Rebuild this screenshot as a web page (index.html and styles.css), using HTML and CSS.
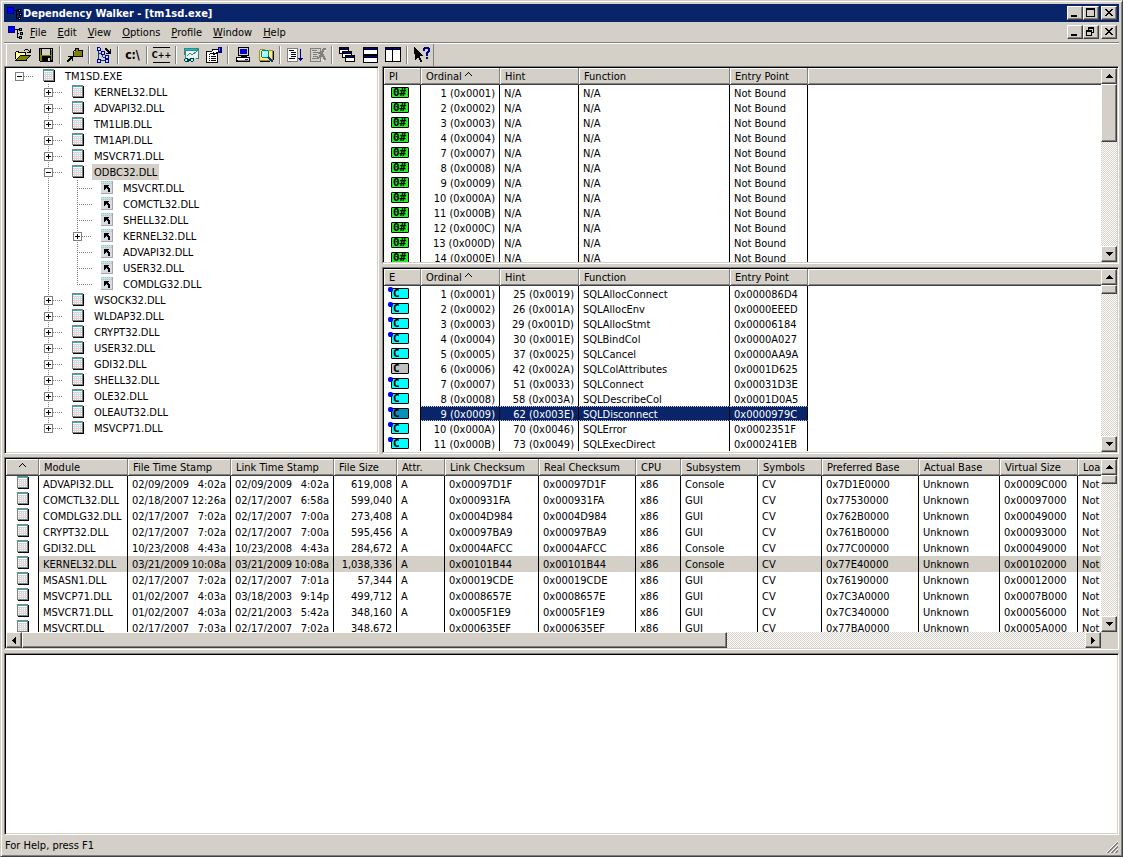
FILE: index.html
```html
<!DOCTYPE html>
<html lang="en">
<head>
  <meta charset="UTF-8" />
  <title>Dependency Walker - [tm1sd.exe]</title>
  <link rel="stylesheet" href="styles.css">
</head>
<body>

  <!-- icon sprite -->
  <svg class="sprite" xmlns="http://www.w3.org/2000/svg">
    <symbol id="i-app" viewBox="0 0 16 16">
      <path d="M0 2h7v7h-7z" fill="#000080"/><path d="M1 3h5v5h-5z" fill="#00f"/>
      <path d="M7 5h2v1h-2zM9 5h1v9h-1zM10 5h1v1h-1zM10 9h1v1h-1zM10 13h1v1h-1z" fill="#000"/>
      <path d="M11 4h3v3h-3zM12 8h3v3h-3zM11 12h3v3h-3z" fill="#000"/>
      <path d="M12 5h1v1h-1zM13 9h1v1h-1zM12 13h1v1h-1z" fill="#6cc"/>
    </symbol>
    <symbol id="i-min" viewBox="0 0 12 10"><path d="M2 7h6v2h-6z"/></symbol>
    <symbol id="i-max" viewBox="0 0 12 10"><path d="M1 0h9v9h-9zM2 2v6h7v-6z" fill-rule="evenodd"/></symbol>
    <symbol id="i-restore" viewBox="0 0 12 10"><path d="M3 0h6v6h-2v3h-6v-6h2zM4 2v1h3v2h1v-3zM2 5v3h4v-3z" fill-rule="evenodd"/></symbol>
    <symbol id="i-close" viewBox="0 0 12 10"><path d="M2 1h2v1h1v1h2v-1h1v-1h2v1h-1v1h-1v1h-1v1h1v1h1v1h1v1h-2v-1h-1v-1h-2v1h-1v1h-2v-1h1v-1h1v-1h1v-1h-1v-1h-1v-1h-1z"/></symbol>
    <symbol id="i-up" viewBox="0 0 7 4"><path d="M3 0h1v1h1v1h1v1h1v1h-7v-1h1v-1h1v-1h1z"/></symbol>
    <symbol id="i-down" viewBox="0 0 7 4"><path d="M0 0h7v1h-1v1h-1v1h-1v1h-1v-1h-1v-1h-1v-1h-1z"/></symbol>
    <symbol id="i-left" viewBox="0 0 4 7"><path d="M4 0v7h-1v-1h-1v-1h-1v-1h-1v-1h1v-1h1v-1h1v-1z"/></symbol>
    <symbol id="i-right" viewBox="0 0 4 7"><path d="M0 0v7h1v-1h1v-1h1v-1h1v-1h-1v-1h-1v-1h-1v-1z"/></symbol>

    <symbol id="i-open" viewBox="0 0 16 16">
      <path d="M9 3h1v-1h3v1h1v1h1v-2h1v4h-4v-1h2v-1h-1v-1h-3v1h-1z"/>
      <path d="M1 5h3v1h6v2h-5l-3 5h-1z" fill="#ffff9c"/>
      <path d="M1 4h3v1h7v3h-1v-2h-7v-1h-2v7h-1v-7h1z"/>
      <path d="M5 8h11v1h-1v1h-1v1h-1v1h-1v2h-12v-1h1v-1h1v-1h1v-1h1v-1h1z"/>
      <path d="M5 9h9v1h-1v1h-1v1h-1v1h-9v-1h1v-1h1v-1h1z" fill="#808000"/>
    </symbol>
    <symbol id="i-save" viewBox="0 0 16 16">
      <path d="M1 1h14v14h-13v-1h-1z"/>
      <path d="M2 2h1v12h-1zM3 8h11v1h-11zM13 3h1v10h-1zM3 9h1v5h-1z" fill="#808000"/>
      <path d="M4 2h8v6h-8z" fill="#d4d0c8"/><path d="M10 11h2v3h-2zM13 2h1v1h-1z" fill="#d4d0c8"/>
    </symbol>
    <symbol id="i-find" viewBox="0 0 16 16">
      <path d="M8 1h4v2h4v7h-10v-6h1v-1h1z"/>
      <path d="M9 2h2v2h-2zM7 4h8v5h-8z" fill="#808000"/><path d="M7 4h1v1h-1z" fill="#d4d0c8"/>
      <path d="M1 9h5v5h-1v-2h-1v1h-1v1h-1v1h-2v-2h1v-1h1v-1h1v-1h-2z"/>
    </symbol>
    <symbol id="i-tree" viewBox="0 0 16 16">
      <path d="M2 4h1v8h-1zM3 6h2v1h-2zM3 13h6v1h-6zM6 8h1v2h-1zM7 10h2v1h-2z" fill="#004080"/>
      <path d="M1 0h3v1h1v3h-4zM5 4h4v4h-4zM9 8h4v4h-4zM9 12h4v4h-4zM1 12h4v4h-4z" fill="#0000a0"/>
      <path d="M2 1h2v2h-2zM6 5h2v2h-2zM10 9h2v2h-2zM10 13h2v2h-2zM2 13h2v2h-2z" fill="#cde"/>
      <path d="M9 1h2v1h1v1h1v1h1v-2h1v5h-5v-1h2v-1h-1v-1h-1v-1h-1z"/>
    </symbol>
    <symbol id="i-view" viewBox="0 0 16 16">
      <path d="M1 1h15v11h-3v-1h2v-7h-12v7h-1v-3h-1z" fill="#408080"/>
      <path d="M2 2h12v1h-12z" fill="#0cc"/><path d="M3 4h12v7h-12z" fill="#e8f4f4"/>
      <path d="M4 9l3-3 2 2 5-4" stroke="#408080" fill="none"/>
      <path d="M1 11h4v1h2v-1h4v3h-1v1h-2v-1h-2v1h-4v-1h-1v-2h1z" fill="#004040"/>
      <path d="M2 12h2v2h-2zM8 12h2v2h-2z" fill="#9ff"/>
    </symbol>
    <symbol id="i-prop" viewBox="0 0 16 16">
      <path d="M0 4h12v12h-12z"/><path d="M1 5h10v10h-10z" fill="#fff"/>
      <path d="M3 7h1v1h-1zM5 9h5v1h-5zM3 9h1v1h-1zM3 11h1v1h-1zM5 11h5v1h-5zM3 13h1v1h-1zM5 13h5v1h-5z"/>
      <path d="M6 2h7v4h-2v1h-2v1h-2v-1h-3v-1h1v-2h1z"/><path d="M7 3h5v2h-2v1h-2v-1h-1v1h-2v-1h1v-1h1z" fill="#fff"/>
      <path d="M12 0h4v6h-4z" fill="#000080"/><path d="M13 1h1v3h-1z" fill="#66f"/>
    </symbol>
    <symbol id="i-pc" viewBox="0 0 16 16">
      <path d="M3 0h11v9h-11z"/><path d="M4 1h9v7h-9z" fill="#d4d0c8"/><path d="M5 2h7v5h-7z" fill="#00c"/>
      <path d="M6 9h6v1h-6zM1 10h14v5h-14z"/><path d="M2 11h12v2h-12z" fill="#fff"/><path d="M3 13h11v1h-11z" fill="#808080"/><path d="M10 12h3v1h-3z" fill="#00f"/>
    </symbol>
    <symbol id="i-search" viewBox="0 0 16 16">
      <path d="M1 3h1v-1h5v1h8v11h-14z" fill="#a09030"/><path d="M2 3h5v1h7v9h-12z" fill="#ffe97f"/>
      <circle cx="7" cy="7" r="4" fill="#9ff" stroke="#008080"/><path d="M5 5h2v1h-1v1h-1z" fill="#fff"/>
      <path d="M10 10l5 5" stroke="#004080" stroke-width="2"/>
      <path d="M15 4h1v9h-1zM2 14h10v1h-10z"/>
    </symbol>
    <symbol id="i-expand" viewBox="0 0 16 16">
      <path d="M0 1h11v14h-11z" fill="#808080"/><path d="M1 2h9v12h-9z" fill="#fff"/>
      <path d="M2 3h5v1h-5zM4 5h5v1h-5zM4 7h5v1h-5zM4 9h5v1h-5zM2 11h6v1h-6z"/>
      <path d="M13 2h1v9h2v1h-1v1h-1v1h-1v-1h-1v-1h-1v-1h2z" fill="#000080"/>
    </symbol>
    <symbol id="i-noexp" viewBox="0 0 16 16">
      <path d="M0 1h11v14h-11z" fill="#808080"/><path d="M1 2h9v12h-9z" fill="#d4d0c8"/>
      <path d="M2 3h5v1h-5zM3 5h5v1h-5zM3 7h4v1h-4zM3 9h5v1h-5zM2 11h6v1h-6z" fill="#808080"/>
      <path d="M13 1h3v2h-2v2h-1v2h1v2h1v2h1v2h-2v-1h-1v-2h-2v1h-2v1h-2v-2h2v-2h1v-1h-2v-2h3v-1h1z" fill="#808080"/>
      <path d="M15 3h1v1h-1zM11 12h1v1h-1zM13 13h1v1h-1z" fill="#fff"/>
    </symbol>
    <symbol id="i-cascade" viewBox="0 0 16 16">
      <path d="M0 0h10v7h-10zM3 4h10v7h-10zM6 8h10v7h-10z"/>
      <path d="M1 3h8v1h-6v2h-2zM4 7h8v1h-6v2h-2zM7 11h8v3h-8z" fill="#fff"/>
      <path d="M1 1h8v1h-8zM4 5h8v1h-8zM7 9h8v1h-8z" fill="#000080"/>
    </symbol>
    <symbol id="i-horz" viewBox="0 0 16 16">
      <path d="M1 0h15v16h-15z"/><path d="M2 3h13v4h-13zM2 11h13v4h-13z" fill="#fff"/>
      <path d="M2 1h13v1h-13zM2 9h13v1h-13z" fill="#0000a0"/>
    </symbol>
    <symbol id="i-vert" viewBox="0 0 16 16">
      <path d="M0 0h16v15h-16z"/><path d="M1 3h6v11h-6zM8 3h7v11h-7z" fill="#fff"/>
      <path d="M1 1h6v1h-6zM8 1h7v1h-7z" fill="#0000a0"/>
    </symbol>
    <symbol id="i-help" viewBox="0 0 16 16">
      <path d="M0 0h1v1h1v1h1v1h1v1h1v1h1v1h1v1h1v1h1v1h-3v2h1v2h1v2h-2v-2h-1v-2h-2v1h-1v1h-1z"/>
      <path d="M9 1h1v-1h5v1h1v4h-1v1h-1v3h-2v-4h1v-1h1v-2h-3v2h-2zM12 10h2v2h-2z" fill="#000080"/>
    </symbol>

    <symbol id="i-mod" viewBox="0 0 12 13">
      <path d="M1 1h11v12h-11z"/><path d="M0 0h11v12h-11z" fill="#808080"/>
      <path d="M1 3h9v8h-9z" fill="#d8d4d8"/><path d="M1 1h9v1h-9z" fill="#2bb"/><path d="M1 2h9v1h-9z" fill="#fff"/>
      <path d="M1 4.500h9M1 6.500h9M1 8.500h9M1 10.500h9" stroke="#fff" stroke-dasharray="1 1"/>
    </symbol>
    <symbol id="i-dup" viewBox="0 0 12 13">
      <path d="M0 0h12v13h-12z" fill="#a8a8ac"/><path d="M0 0h11v12h-11z" fill="#d8dce0"/>
      <path d="M0 .5h11M0 2.500h11" stroke="#8cc" stroke-dasharray="1 1"/>
      <path d="M3 4h5v1h-1v1h1v1h1v4h-2v-3h-1v-1h-1v1h-1v1h-1z"/>
    </symbol>
  </svg>

  <div class="window">
    <header class="titlebar">
      <svg class="icon"><use href="#i-app"/></svg>
      <h1>Dependency Walker - [tm1sd.exe]</h1>
      <div class="win-buttons">
        <button aria-label="Minimize"><svg><use href="#i-min"/></svg></button>
        <button aria-label="Maximize"><svg><use href="#i-max"/></svg></button>
        <button aria-label="Close"><svg><use href="#i-close"/></svg></button>
      </div>
    </header>

    <nav class="menubar">
      <svg class="icon"><use href="#i-app"/></svg>
      <button><u>F</u>ile</button>
      <button><u>E</u>dit</button>
      <button><u>V</u>iew</button>
      <button><u>O</u>ptions</button>
      <button><u>P</u>rofile</button>
      <button><u>W</u>indow</button>
      <button><u>H</u>elp</button>
      <div class="win-buttons">
        <button aria-label="Minimize document"><svg><use href="#i-min"/></svg></button>
        <button aria-label="Restore document"><svg><use href="#i-restore"/></svg></button>
        <button aria-label="Close document"><svg><use href="#i-close"/></svg></button>
      </div>
    </nav>

    <div class="toolbar-row">
      <div class="toolbar">
        <button aria-label="Open"><svg><use href="#i-open"/></svg></button>
        <button aria-label="Save"><svg><use href="#i-save"/></svg></button>
        <i class="sep"></i>
        <button aria-label="Copy"><svg><use href="#i-find"/></svg></button>
        <i class="sep"></i>
        <button aria-label="Auto expand"><svg><use href="#i-tree"/></svg></button>
        <i class="sep"></i>
        <button class="path-btn">c:\</button>
        <i class="sep"></i>
        <button class="cpp-btn">C++</button>
        <i class="sep"></i>
        <button aria-label="View module"><svg><use href="#i-view"/></svg></button>
        <button aria-label="Properties"><svg><use href="#i-prop"/></svg></button>
        <i class="sep"></i>
        <button aria-label="System information"><svg><use href="#i-pc"/></svg></button>
        <button aria-label="Search order"><svg><use href="#i-search"/></svg></button>
        <i class="sep"></i>
        <button aria-label="Start profiling"><svg><use href="#i-expand"/></svg></button>
        <button aria-label="Stop profiling" disabled><svg><use href="#i-noexp"/></svg></button>
        <i class="sep"></i>
        <button aria-label="Cascade"><svg><use href="#i-cascade"/></svg></button>
        <button aria-label="Tile horizontally"><svg><use href="#i-horz"/></svg></button>
        <button aria-label="Tile vertically"><svg><use href="#i-vert"/></svg></button>
        <i class="sep"></i>
        <button aria-label="Context help"><svg><use href="#i-help"/></svg></button>
      </div>
    </div>

    <main class="panes">
      <div class="upper">
        <section class="pane tree" id="tree"></section>
        <div class="functions">
          <section class="pane">
            <div class="view">
              <table class="list" id="imports"></table>
            </div>
            <div class="vscroll">
              <button aria-label="Scroll up"><svg class="v"><use href="#i-up"/></svg></button>
              <div class="thumb thumb-mid"></div>
              <button aria-label="Scroll down"><svg class="v"><use href="#i-down"/></svg></button>
            </div>
          </section>
          <section class="pane">
            <div class="view">
              <table class="list" id="exports"></table>
            </div>
            <div class="vscroll">
              <button aria-label="Scroll up"><svg class="v"><use href="#i-up"/></svg></button>
              <div class="thumb"></div>
              <button aria-label="Scroll down"><svg class="v"><use href="#i-down"/></svg></button>
            </div>
          </section>
        </div>
      </div>

      <section class="pane modules">
        <div class="view">
          <table class="list" id="modules"></table>
        </div>
        <div class="vscroll">
          <button aria-label="Scroll up"><svg class="v"><use href="#i-up"/></svg></button>
          <div class="thumb"></div>
          <button aria-label="Scroll down"><svg class="v"><use href="#i-down"/></svg></button>
        </div>
        <div class="hscroll">
          <button aria-label="Scroll left"><svg class="h"><use href="#i-left"/></svg></button>
          <div class="thumb"></div>
          <button aria-label="Scroll right"><svg class="h"><use href="#i-right"/></svg></button>
        </div>
      </section>

      <section class="pane log"></section>
    </main>

    <footer class="statusbar">
      <span>For Help, press F1</span>
      <svg class="grip" viewBox="0 0 12 12">
        <path d="M0 12L12 0M4 12L12 4M8 12L12 8" stroke="#fff"/>
        <path d="M1 12L12 1M2 12L12 2M5 12L12 5M6 12L12 6M9 12L12 9M10 12L12 10" stroke="#808080"/>
      </svg>
    </footer>
  </div>

  <script>
    const tree = {
      name: 'TM1SD.EXE', open: true, children: [
        { name: 'KERNEL32.DLL' }, { name: 'ADVAPI32.DLL' }, { name: 'TM1LIB.DLL' },
        { name: 'TM1API.DLL' }, { name: 'MSVCR71.DLL' },
        { name: 'ODBC32.DLL', open: true, selected: true, children: [
          { name: 'MSVCRT.DLL', dup: true, leaf: true },
          { name: 'COMCTL32.DLL', dup: true, leaf: true },
          { name: 'SHELL32.DLL', dup: true, leaf: true },
          { name: 'KERNEL32.DLL', dup: true },
          { name: 'ADVAPI32.DLL', dup: true, leaf: true },
          { name: 'USER32.DLL', dup: true, leaf: true },
          { name: 'COMDLG32.DLL', dup: true, leaf: true }
        ] },
        { name: 'WSOCK32.DLL' }, { name: 'WLDAP32.DLL' }, { name: 'CRYPT32.DLL' },
        { name: 'USER32.DLL' }, { name: 'GDI32.DLL' }, { name: 'SHELL32.DLL' },
        { name: 'OLE32.DLL' }, { name: 'OLEAUT32.DLL' }, { name: 'MSVCP71.DLL' }
      ]
    };

    const imports = [1, 2, 3, 4, 7, 8, 9, 10, 11, 12, 13, 14];

    // first field: f = dotted badge, p = plain badge, n = gray badge
    const exportRows = [
      ['f', '1 (0x0001)', '25 (0x0019)', 'SQLAllocConnect', '0x000086D4'],
      ['f', '2 (0x0002)', '26 (0x001A)', 'SQLAllocEnv', '0x0000EEED'],
      ['f', '3 (0x0003)', '29 (0x001D)', 'SQLAllocStmt', '0x00006184'],
      ['f', '4 (0x0004)', '30 (0x001E)', 'SQLBindCol', '0x0000A027'],
      ['p', '5 (0x0005)', '37 (0x0025)', 'SQLCancel', '0x0000AA9A'],
      ['n', '6 (0x0006)', '42 (0x002A)', 'SQLColAttributes', '0x0001D625'],
      ['f', '7 (0x0007)', '51 (0x0033)', 'SQLConnect', '0x00031D3E'],
      ['f', '8 (0x0008)', '58 (0x003A)', 'SQLDescribeCol', '0x0001D0A5'],
      ['f', '9 (0x0009)', '62 (0x003E)', 'SQLDisconnect', '0x0000979C'],
      ['f', '10 (0x000A)', '70 (0x0046)', 'SQLError', '0x0002351F'],
      ['f', '11 (0x000B)', '73 (0x0049)', 'SQLExecDirect', '0x000241EB']
    ];

    const moduleRows = [
      ['ADVAPI32.DLL', '02/09/2009 4:02a', '02/09/2009 4:02a', '619,008', 'A', '0x00097D1F', '0x00097D1F', 'Console', '0x7D1E0000', '0x0009C000'],
      ['COMCTL32.DLL', '02/18/2007 12:26a', '02/17/2007 6:58a', '599,040', 'A', '0x000931FA', '0x000931FA', 'GUI', '0x77530000', '0x00097000'],
      ['COMDLG32.DLL', '02/17/2007 7:02a', '02/17/2007 7:00a', '273,408', 'A', '0x0004D984', '0x0004D984', 'GUI', '0x762B0000', '0x00049000'],
      ['CRYPT32.DLL', '02/17/2007 7:02a', '02/17/2007 7:00a', '595,456', 'A', '0x00097BA9', '0x00097BA9', 'GUI', '0x761B0000', '0x00093000'],
      ['GDI32.DLL', '10/23/2008 4:43a', '10/23/2008 4:43a', '284,672', 'A', '0x0004AFCC', '0x0004AFCC', 'Console', '0x77C00000', '0x00049000'],
      ['KERNEL32.DLL', '03/21/2009 10:08a', '03/21/2009 10:08a', '1,038,336', 'A', '0x00101B44', '0x00101B44', 'Console', '0x77E40000', '0x00102000'],
      ['MSASN1.DLL', '02/17/2007 7:02a', '02/17/2007 7:01a', '57,344', 'A', '0x00019CDE', '0x00019CDE', 'GUI', '0x76190000', '0x00012000'],
      ['MSVCP71.DLL', '01/02/2007 4:03a', '03/18/2003 9:14p', '499,712', 'A', '0x0008657E', '0x0008657E', 'GUI', '0x7C3A0000', '0x0007B000'],
      ['MSVCR71.DLL', '01/02/2007 4:03a', '02/21/2003 5:42a', '348,160', 'A', '0x0005F1E9', '0x0005F1E9', 'GUI', '0x7C340000', '0x00056000'],
      ['MSVCRT.DLL', '02/17/2007 7:03a', '02/17/2007 7:02a', '348,672', '', '0x000635EF', '0x000635EF', 'GUI', '0x77BA0000', '0x0005A000']
    ];

    function icon(name) {
      return `<svg class="mod-icon"><use href="#i-${name}"/></svg>`;
    }

    function renderNode(node) {
      const toggle = node.leaf ? '' : `<button class="toggle${node.open ? ' open' : ''}" aria-label="Toggle ${node.name}"></button>`;
      const children = node.children ? `<ul>${node.children.map(renderNode).join('')}</ul>` : '';
      return `
        <li>
          <div class="node${node.leaf ? ' leaf' : ''}">
            ${toggle}<i class="dots"></i>${icon(node.dup ? 'dup' : 'mod')}
            <span class="label${node.selected ? ' selected' : ''}">${node.name}</span>
          </div>
          ${children}
        </li>`;
    }

    // widths is one entry per column, the last column takes what is left
    function fillTable(id, widths, heads, rows) {
      const cols = widths.map(w => `<col style="width: ${w}px">`).join('') + '<col>';
      const ths = heads.map(h => `<th scope="col">${h}</th>`).join('');
      document.getElementById(id).innerHTML =
        `<colgroup>${cols}</colgroup><thead><tr>${ths}</tr></thead><tbody>${rows.join('')}</tbody>`;
    }

    function stamp(text) {
      const [date, time] = text.split(' ');
      return `<div class="stamp"><span>${date}</span><span>${time}</span></div>`;
    }

    const caret = '<svg class="caret" viewBox="0 0 7 4"><path d="M3 0h1v1h-1zM2 1h1v1h-1zM4 1h1v1h-1zM1 2h1v1h-1zM5 2h1v1h-1zM0 3h1v1h-1zM6 3h1v1h-1z"/></svg>';
    const funcWidths = [37, 79, 79, 151, 78];

    document.getElementById('tree').innerHTML = `<ul>${renderNode(tree)}</ul>`;

    fillTable('imports', funcWidths,
      ['PI', 'Ordinal ' + caret, 'Hint', 'Function', 'Entry Point', ''],
      imports.map(n => `
        <tr>
          <td><span class="badge import">0#</span></td>
          <td class="num">${n} (0x${n.toString(16).toUpperCase().padStart(4, '0')})</td>
          <td>N/A</td><td>N/A</td><td>Not Bound</td><td></td>
        </tr>`));

    fillTable('exports', funcWidths,
      ['E', 'Ordinal ' + caret, 'Hint', 'Function', 'Entry Point', ''],
      exportRows.map((r, i) => `
        <tr class="${i === 8 ? 'active' : ''}">
          <td><span class="badge export kind-${r[0]}">C</span></td>
          <td class="num">${r[1]}</td><td class="num">${r[2]}</td>
          <td>${r[3]}</td><td>${r[4]}</td><td></td>
        </tr>`));

    fillTable('modules', [33, 89, 103, 103, 63, 48, 94, 97, 45, 77, 64, 97, 81, 78],
      [caret, 'Module', 'File Time Stamp', 'Link Time Stamp', 'File Size', 'Attr.', 'Link Checksum', 'Real Checksum',
        'CPU', 'Subsystem', 'Symbols', 'Preferred Base', 'Actual Base', 'Virtual Size', 'Loa'],
      moduleRows.map((r, i) => `
        <tr class="${i === 5 ? 'marked' : ''}">
          <td>${icon('mod')}</td><td>${r[0]}</td><td>${stamp(r[1])}</td><td>${stamp(r[2])}</td>
          <td class="num">${r[3]}</td><td>${r[4]}</td><td>${r[5]}</td><td>${r[6]}</td>
          <td>x86</td><td>${r[7]}</td><td>CV</td><td>${r[8]}</td><td>Unknown</td><td>${r[9]}</td><td>Not</td>
        </tr>`));
  </script>
</body>
</html>
```

FILE: styles.css
```css
* {
  box-sizing: border-box;
}
body {
  margin: 0;
  background: #d4d0c8;
  color: #000;
  font-family: "DejaVu Sans Condensed", Tahoma, "DejaVu Sans", sans-serif;
  font-size: 11px;
}
button {
  margin: 0;
  padding: 0;
  border: 0;
  background: none;
  color: inherit;
  font: inherit;
}
svg {
  display: block;
  flex: none;
  shape-rendering: crispEdges;
}
ul {
  list-style: none;
  margin: 0;
  padding: 0;
}
.sprite {
  position: absolute;
  width: 0;
  height: 0;
}

/* window frame */
.window {
  display: flex;
  flex-direction: column;
  height: 100vh;
  padding: 3px 3px 2px;
  border: 1px solid #d4d0c8;
  border-right: 1px solid #404040;
  border-bottom: 1px solid #404040;
  box-shadow: inset 1px 1px #fff, inset -1px -1px #808080;
}
.titlebar {
  display: flex;
  align-items: center;
  height: 18px;
  padding: 0 2px 0 3px;
  background: #0a246a;
  color: #fff;
}
.icon {
  width: 16px;
  height: 16px;
}
.titlebar h1 {
  flex: 1;
  margin: 0;
  font-size: 11px;
  font-weight: bold;
}
.win-buttons {
  display: flex;
  color: #000;
}
.win-buttons button,
.vscroll button,
.hscroll button,
.thumb {
  background: #d4d0c8;
  border: 1px solid;
  border-color: #fff #404040 #404040 #fff;
  box-shadow: inset -1px -1px #808080;
}
.win-buttons button {
  width: 16px;
  height: 14px;
  padding: 1px;
}
.win-buttons button:last-child {
  margin-left: 2px;
}
.win-buttons svg {
  width: 12px;
  height: 10px;
}

.menubar {
  display: flex;
  align-items: center;
  height: 20px;
  padding: 0 2px 0 4px;
}
.menubar > button {
  height: 18px;
  padding: 0 5px 0 6px;
}
.menubar .win-buttons {
  margin-left: auto;
}

.toolbar-row {
  border-top: 1px solid #808080;
  box-shadow: inset 0 1px #fff;
  height: 24px;
  padding-top: 1px;
}
.toolbar {
  display: inline-flex;
  align-items: center;
  height: 22px;
  margin-left: 2px;
  padding-left: 4px;
  border-left: 1px solid #fff;
  border-right: 1px solid #808080;
}
.toolbar button {
  display: flex;
  align-items: center;
  justify-content: center;
  width: 23px;
  height: 22px;
}
.toolbar svg {
  width: 16px;
  height: 16px;
}
.toolbar .path-btn {
  font-size: 12px;
  font-weight: bold;
}
.toolbar .cpp-btn {
  width: 17px;
  height: 16px;
  margin: 0 3px;
  border-top: 1px solid #000;
  border-bottom: 1px solid #000;
  font-size: 9px;
  font-weight: bold;
}
.sep {
  width: 2px;
  height: 18px;
  margin: 0 2px;
  border-left: 1px solid #808080;
  border-right: 1px solid #fff;
}

/* panes */
.panes {
  flex: 1;
  min-height: 0;
  display: grid;
  grid-template-rows: 388fr 193fr 182fr;
  gap: 3px;
}
.upper {
  display: grid;
  grid-template-columns: 375px 1fr;
  gap: 3px;
  min-height: 0;
}
.functions {
  display: grid;
  grid-template-rows: 198fr 187fr;
  gap: 3px;
  min-height: 0;
}
.pane {
  display: grid;
  grid-template-columns: 1fr 17px;
  grid-template-rows: 1px 1fr;
  min-height: 0;
  min-width: 0;
  overflow: hidden;
  background: #fff;
  border: 1px solid;
  border-color: #808080 #fff #fff #808080;
  box-shadow: inset -1px -1px #d4d0c8;
}
.pane::before {
  content: "";
  grid-column: 1 / -1;
  background: #000;
}
.view {
  margin-bottom: 1px;
  overflow: hidden;
  border-left: 1px solid #000;
}
.modules {
  grid-template-rows: 1px 1fr 17px;
}
.modules .view,
.modules .vscroll {
  margin-bottom: 0;
}
.modules::after {
  content: "";
  margin: 0 1px 1px 0;
  background: #d4d0c8;
}
.log::after,
.tree > ul {
  content: "";
  grid-column: 1 / -1;
  border-left: 1px solid #000;
}

.tree li {
  background: repeating-linear-gradient(#808080 0 1px, transparent 1px 2px) 13px 0 / 1px 100% no-repeat;
}
.tree li:last-child {
  background-size: 1px 8px;
}
.tree > ul > li {
  background: none;
}
.tree li ul {
  margin-left: 29px;
}
.node {
  display: flex;
  align-items: center;
  height: 16px;
  padding-left: 9px;
}
.leaf {
  padding-left: 13px;
}
.toggle {
  width: 9px;
  height: 9px;
  border: 1px solid #808080;
  background:
    linear-gradient(#000, #000) 1px 3px / 5px 1px no-repeat,
    linear-gradient(#000, #000) 3px 1px / 1px 5px no-repeat,
    #fff;
}
.toggle.open {
  background: linear-gradient(#000, #000) 1px 3px / 5px 1px no-repeat, #fff;
}
.dots {
  width: 10px;
  height: 1px;
  margin-right: 9px;
  background: repeating-linear-gradient(90deg, #808080 0 1px, transparent 1px 2px);
}
.leaf .dots {
  width: 15px;
}
.mod-icon {
  width: 12px;
  height: 13px;
}
.node .mod-icon {
  align-self: flex-start;
  margin-top: 1px;
}
.label {
  margin-left: 8px;
  padding: 1px 2px 0;
  line-height: 15px;
}
.label.selected {
  background: #d4d0c8;
}

/* lists */
.list {
  table-layout: fixed;
  width: 100%;
  border-spacing: 0;
}
.list th {
  height: 17px;
  padding: 2px 5px 0;
  background: #d4d0c8;
  border-right: 1px solid #808080;
  border-bottom: 1px solid #404040;
  box-shadow: inset 1px 1px #fff, inset 0 -1px #808080;
  font-weight: normal;
  text-align: left;
  line-height: 14px;
  white-space: nowrap;
  overflow: hidden;
}
.list td {
  height: 15px;
  padding: 2px 4px 0;
  border-right: 1px solid #000;
  line-height: 13px;
  white-space: nowrap;
  overflow: hidden;
}
.list th:last-child,
.list td:last-child {
  border-right: 0;
}
.modules .list td {
  height: 16px;
  padding-top: 1px;
  line-height: 15px;
}
.list .num {
  text-align: right;
}
.caret {
  display: inline-block;
  width: 7px;
  height: 4px;
  vertical-align: 4px;
}
.modules th:first-child {
  text-align: center;
}
.modules td:first-child {
  vertical-align: top;
}
.modules .mod-icon {
  margin-left: 7px;
}
.stamp {
  display: flex;
  justify-content: space-between;
}
.marked td:not(:first-child) {
  background: #d4d0c8;
}
.active td:not(:first-child):not(:last-child) {
  background: #0a246a;
  color: #fff;
  border-top: 1px dotted #d4d0c8;
  border-bottom: 1px dotted #d4d0c8;
  line-height: 11px;
}
.list td:first-child {
  padding-top: 0;
  overflow: visible;
}
.badge {
  position: relative;
  display: block;
  width: 18px;
  height: 11px;
  margin-left: 3px;
  padding-left: 1px;
  border: 1px solid #000;
  border-radius: 1px;
  font-family: "DejaVu Sans Mono", monospace;
  font-size: 11px;
  font-weight: bold;
  line-height: 9px;
}
.import {
  background: #2e2;
}
.export {
  background: #0ff;
}
.kind-n {
  background: #c0c0c0;
}
.active .badge {
  background: #0890b8;
}
.kind-f::before {
  content: "";
  position: absolute;
  left: -4px;
  top: -2px;
  width: 5px;
  height: 5px;
  border-radius: 2px;
  background: #00f;
}

/* scroll bars */
.vscroll,
.hscroll {
  display: flex;
  background: repeating-conic-gradient(#fff 0 25%, #d4d0c8 0 50%) 0 0 / 2px 2px;
}
.vscroll {
  flex-direction: column;
  margin: 0 1px 1px 0;
}
.vscroll button,
.hscroll button {
  display: flex;
  align-items: center;
  justify-content: center;
  flex: none;
  width: 16px;
  height: 16px;
}
.vscroll button:last-child {
  margin-top: auto;
}
.hscroll button:last-child {
  margin-left: auto;
}
.vscroll .thumb {
  height: 9px;
}
.vscroll .thumb-mid {
  height: 30%;
}
.hscroll {
  margin-bottom: 1px;
  border-left: 1px solid #000;
}
.hscroll .thumb {
  width: 64.4%;
}
svg.v {
  width: 7px;
  height: 4px;
}
svg.h {
  width: 4px;
  height: 7px;
}

.statusbar {
  display: flex;
  align-items: center;
  justify-content: space-between;
  height: 19px;
  padding: 2px 1px 0;
}
.grip {
  width: 12px;
  height: 12px;
  align-self: flex-end;
  margin-bottom: 1px;
  fill: none;
}
```
